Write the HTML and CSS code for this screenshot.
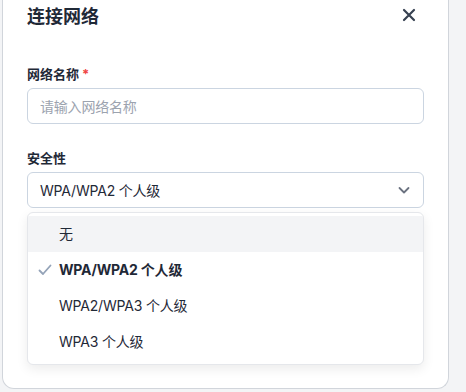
FILE: index.html
```html
<!DOCTYPE html>
<html lang="zh-CN">
<head>
  <meta charset="UTF-8">
  <meta name="viewport" content="width=device-width, initial-scale=1.0">
  <title>连接网络</title>
  <link rel="stylesheet" href="styles.css">
</head>
<body>
  <div class="modal">
    <header class="modal-header">
      <h2>连接网络</h2>
      <button class="close" aria-label="关闭">
        <svg width="14" height="14" viewBox="0 0 14 14"><path d="M2 2L12 12M12 2L2 12" stroke="currentColor" stroke-width="2.2" stroke-linecap="round"/></svg>
      </button>
    </header>

    <form class="form">
      <div class="field">
        <label for="ssid">网络名称 <span class="req">*</span></label>
        <input type="text" id="ssid" placeholder="请输入网络名称">
      </div>

      <div class="field select-field">
        <label>安全性</label>
        <div class="select">
          <span>WPA/WPA2 个人级</span>
          <svg width="14" height="14" viewBox="0 0 14 14"><path d="M2.5 5L7 9.5L11.5 5" fill="none" stroke="currentColor" stroke-width="1.8" stroke-linecap="round" stroke-linejoin="round"/></svg>
        </div>
        <ul class="options">
          <li class="option hover">无</li>
          <li class="option selected">
            <svg class="check" width="14" height="14" viewBox="0 0 14 14"><path d="M1.5 7.5L5 11L12.5 2.5" fill="none" stroke="currentColor" stroke-width="1.8" stroke-linecap="round" stroke-linejoin="round"/></svg>
            WPA/WPA2 个人级
          </li>
          <li class="option">WPA2/WPA3 个人级</li>
          <li class="option">WPA3 个人级</li>
        </ul>
      </div>
    </form>
  </div>
</body>
</html>
```

FILE: styles.css
```css
body {
  margin: 0;
  background-color: #f3f4f6;
  font-family: Inter, "Noto Sans CJK SC", sans-serif;
  color: #1f2937;
}

.modal {
  box-sizing: border-box;
  margin-left: 2px;
  width: 447px;
  height: 389px;
  background: #fff;
  border: 1px solid #d1d5db;
  border-top: none;
  border-radius: 0 0 12px 12px;
  padding: 0 24px;
}

.modal-header {
  display: flex;
  align-items: center;
  justify-content: space-between;
  height: 30px;
}

.modal-header h2 {
  margin: 0;
  font-size: 18px;
  font-weight: 700;
  color: #1f2937;
}

.close {
  border: none;
  background: none;
  padding: 0;
  margin-right: 8px;
  color: #374151;
  display: flex;
  cursor: pointer;
}

.form {
  margin-top: 34px;
}

.field {
  display: flex;
  flex-direction: column;
  margin-bottom: 24px;
}

.field label {
  font-size: 13px;
  font-weight: 700;
  line-height: 20px;
  margin-bottom: 4px;
  color: #1f2937;
}

.req {
  color: #ef4444;
}

.field input,
.select {
  box-sizing: border-box;
  width: 397px;
  height: 36px;
  border: 1px solid #cbd5e1;
  border-radius: 6px;
  padding: 0 12px;
  font-family: inherit;
  font-size: 14px;
  letter-spacing: -0.2px;
  color: #1f2937;
  background: #fff;
}

.field input::placeholder {
  color: #9ca3af;
}

.select-field {
  position: relative;
}

.select {
  display: flex;
  align-items: center;
  justify-content: space-between;
}

.select svg {
  color: #6b7280;
}

.options {
  position: absolute;
  top: 64px;
  left: 0;
  box-sizing: border-box;
  width: 397px;
  margin: 0;
  padding: 3px 0 4px;
  list-style: none;
  background: #fff;
  border: 1px solid #e5e7eb;
  border-radius: 6px;
  box-shadow: 0 4px 12px rgba(0, 0, 0, 0.08);
}

.option {
  position: relative;
  height: 36px;
  line-height: 36px;
  padding-left: 31px;
  font-size: 14px;
  letter-spacing: -0.2px;
  color: #1f2937;
}

.option.hover {
  background: #f3f4f6;
}

.option.selected {
  font-weight: 700;
}

.check {
  position: absolute;
  left: 10px;
  top: 11px;
  color: #94a3b8;
}
```
